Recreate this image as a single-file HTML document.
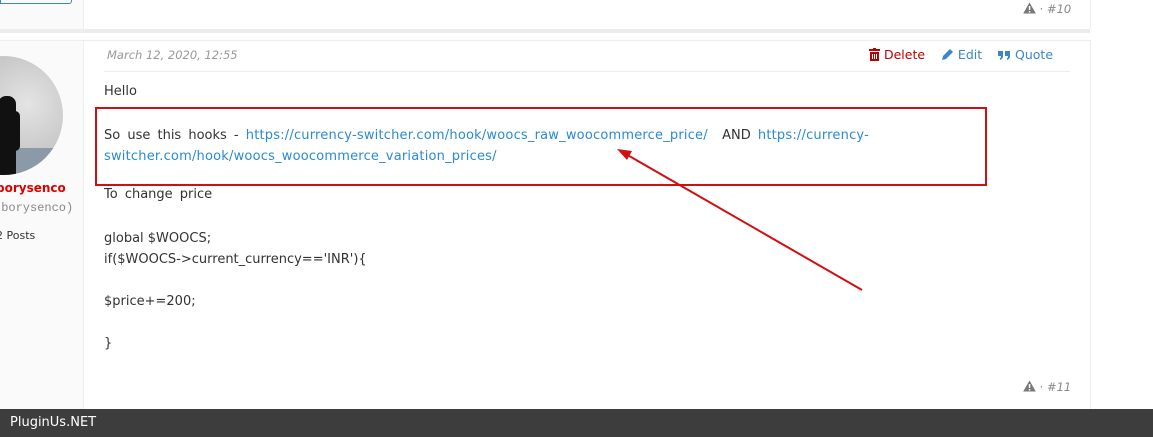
<!DOCTYPE html><html><head><style>
body{margin:0;width:1153px;height:437px;background:#fff;position:relative;overflow:hidden;font-family:"DejaVu Sans","Liberation Sans",sans-serif;font-size:12px;color:#333}
.a{position:absolute}
.t{font-family:"DejaVu Sans",sans-serif;font-size:13px;word-spacing:3px;white-space:nowrap}
a{color:#2a8ad4;text-decoration:none;letter-spacing:0.2px}
</style></head><body>
<div class="a" style="left:0;top:0;width:83px;height:29px;background:#fafafa;border-right:1px solid #eee"></div>
<div class="a" style="left:0;top:0;width:70px;height:3px;border:1px solid #3a86c8;border-top:none;border-radius:0 0 3px 0"></div>
<div class="a" style="left:84px;top:0;width:1006px;height:29px;border-right:1px solid #eee"></div>
<div class="a" style="left:0;top:29px;width:1090px;height:4px;background:#ececec"></div>
<div class="a" style="left:0;top:40px;width:1090px;height:369px;border-top:1px solid #eee;border-right:1px solid #eee"></div>
<div class="a" style="left:0;top:41px;width:83px;height:368px;background:#fafafa;border-right:1px solid #eee"></div>
<div class="a" style="left:-56px;top:56px;width:119px;height:119px;border-radius:50%;overflow:hidden;background:radial-gradient(circle at 70% 40%,#e4e4e4,#a8a8a8)">
<div class="a" style="left:0;top:92px;width:119px;height:27px;background:#8a9aa8"></div>
<div class="a" style="left:54px;top:40px;width:18px;height:80px;background:#111;border-radius:8px 8px 0 0"></div>
<div class="a" style="left:66px;top:55px;width:10px;height:40px;background:#111;border-radius:5px"></div>
</div>
<div class="a t" style="left:-4px;top:181px;color:#d00;font-weight:bold;font-size:12px;word-spacing:0">borysenco</div>
<div class="a" style="left:-6px;top:201px;font-family:'Liberation Mono',monospace;font-size:12px;color:#888">(borysenco)</div>
<div class="a t" style="left:-4px;top:229px;font-size:11px;word-spacing:0">2 Posts</div>
<div class="a" style="left:1023px;top:2px;font-size:11.5px;color:#888;white-space:nowrap"><svg width="13" height="12" style="vertical-align:-1px"><path d="M6.5 0.5L12.8 11.5H0.2Z" fill="#777"/><rect x="5.8" y="4" width="1.5" height="4" fill="#fff"/><rect x="5.8" y="9" width="1.5" height="1.5" fill="#fff"/></svg> · <i>#10</i></div>
<div class="a t" style="left:107px;top:48px;font-style:italic;color:#999;font-size:11.5px;word-spacing:0">March 12, 2020, 12:55</div>
<div class="a t" style="left:869px;top:47px;font-size:12.5px;word-spacing:0"><span style="color:#b00"><svg width="11" height="13" style="vertical-align:-2px"><rect x="0" y="1" width="11" height="2" fill="#b00"/><rect x="4" y="0" width="3" height="2" fill="#b00"/><path d="M1 4h9v9h-9z" fill="#b00"/><path d="M3.5 6v5M5.5 6v5M7.5 6v5" stroke="#fff" stroke-width="1"/></svg> Delete</span>&nbsp;&nbsp;&nbsp;&nbsp;<span style="color:#3a86c8"><svg width="13" height="13" style="vertical-align:-2px"><path d="M1 12l1-4 7-7 3 3-7 7z" fill="#3a86c8"/></svg> Edit</span>&nbsp;&nbsp;&nbsp;&nbsp;<span style="color:#3a86c8"><svg width="13" height="12" style="vertical-align:-1px"><path d="M0 3h5v5c0 2-1 3-3 4v-2c1 0 1-1 1-2H0zM7 3h5v5c0 2-1 3-3 4v-2c1 0 1-1 1-2H7z" fill="#3a86c8"/></svg> Quote</span></div>
<div class="a" style="left:104px;top:71px;width:966px;height:1px;background:#eee"></div>
<div class="a t" style="left:104px;top:84px">Hello</div>
<div class="a t" style="left:104px;top:125px;line-height:21px;width:860px">So use this hooks - <a>https://currency-switcher.com/hook/woocs_raw_woocommerce_price/</a> &nbsp;AND <a>https://currency-</a><br><a>switcher.com/hook/woocs_woocommerce_variation_prices/</a></div>
<div class="a" style="left:95px;top:107px;width:888px;height:75px;border:2px solid #d01010"></div>
<div class="a t" style="left:104px;top:187px">To change price</div>
<div class="a t" style="left:104px;top:228px;line-height:21px;word-spacing:0">global $WOOCS;<br>if($WOOCS-&gt;current_currency=='INR'){<br><br>$price+=200;<br><br>}</div>
<svg class="a" style="left:600px;top:140px" width="270" height="155"><line x1="262" y1="150" x2="24" y2="13" stroke="#d01010" stroke-width="2"/><polygon points="17,9 32,11 27,20" fill="#d01010"/></svg>
<div class="a" style="left:1023px;top:380px;font-size:11.5px;color:#888;white-space:nowrap"><svg width="13" height="12" style="vertical-align:-1px"><path d="M6.5 0.5L12.8 11.5H0.2Z" fill="#777"/><rect x="5.8" y="4" width="1.5" height="4" fill="#fff"/><rect x="5.8" y="9" width="1.5" height="1.5" fill="#fff"/></svg> · <i>#11</i></div>
<div class="a" style="left:0;top:409px;width:1153px;height:28px;background:#3d3d3d;color:#fff;font-family:'DejaVu Sans',sans-serif;font-size:13px;line-height:28px;padding-left:10px;box-sizing:border-box">PluginUs.NET</div>
</body></html>
